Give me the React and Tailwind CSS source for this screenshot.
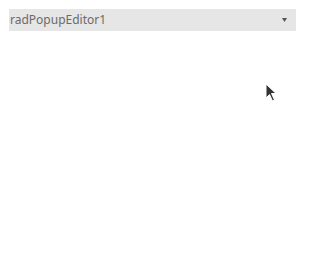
import React from "react";

export default function App() {
  return (
    <div className="relative w-[310px] h-[269px] bg-white" style={{ fontFamily: '"Noto Sans", "Open Sans", sans-serif' }}>
      <div className="pt-[9px] pl-[9px]">
        <div className="w-[287px] h-[22px] bg-[#e6e6e6] flex items-center justify-between pl-[1px] pr-[9px]">
          <span className="text-[12px] text-[#6a6a6a] leading-none">radPopupEditor1</span>
          <svg width="5" height="4" viewBox="0 0 5 4" className="block">
            <path d="M0 0H5L2.5 4Z" fill="#555" />
          </svg>
        </div>
      </div>
      <svg className="absolute left-[265px] top-[83px]" width="12" height="20" viewBox="0 0 12 20">
        <path d="M1 1V15L4.5 11.5L7.5 18L9.5 17L6.5 10.5H11Z" fill="#333" stroke="#fff" strokeWidth="1" />
      </svg>
    </div>
  );
}
